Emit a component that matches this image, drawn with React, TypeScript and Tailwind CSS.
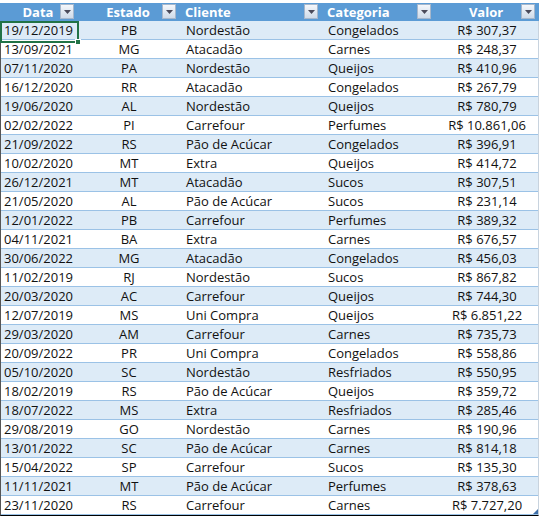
const rows: [string, string, string, string, string][] = [
  ["19/12/2019", "PB", "Nordestão", "Congelados", "R$ 307,37"],
  ["13/09/2021", "MG", "Atacadão", "Carnes", "R$ 248,37"],
  ["07/11/2020", "PA", "Nordestão", "Queijos", "R$ 410,96"],
  ["16/12/2020", "RR", "Atacadão", "Congelados", "R$ 267,79"],
  ["19/06/2020", "AL", "Nordestão", "Queijos", "R$ 780,79"],
  ["02/02/2022", "PI", "Carrefour", "Perfumes", "R$ 10.861,06"],
  ["21/09/2022", "RS", "Pão de Acúcar", "Congelados", "R$ 396,91"],
  ["10/02/2020", "MT", "Extra", "Queijos", "R$ 414,72"],
  ["26/12/2021", "MT", "Atacadão", "Sucos", "R$ 307,51"],
  ["21/05/2020", "AL", "Pão de Acúcar", "Sucos", "R$ 231,14"],
  ["12/01/2022", "PB", "Carrefour", "Perfumes", "R$ 389,32"],
  ["04/11/2021", "BA", "Extra", "Carnes", "R$ 676,57"],
  ["30/06/2022", "MG", "Atacadão", "Congelados", "R$ 456,03"],
  ["11/02/2019", "RJ", "Nordestão", "Sucos", "R$ 867,82"],
  ["20/03/2020", "AC", "Carrefour", "Queijos", "R$ 744,30"],
  ["12/07/2019", "MS", "Uni Compra", "Queijos", "R$ 6.851,22"],
  ["29/03/2020", "AM", "Carrefour", "Carnes", "R$ 735,73"],
  ["20/09/2022", "PR", "Uni Compra", "Congelados", "R$ 558,86"],
  ["05/10/2020", "SC", "Nordestão", "Resfriados", "R$ 550,95"],
  ["18/02/2019", "RS", "Pão de Acúcar", "Queijos", "R$ 359,72"],
  ["18/07/2022", "MS", "Extra", "Resfriados", "R$ 285,46"],
  ["29/08/2019", "GO", "Nordestão", "Carnes", "R$ 190,96"],
  ["13/01/2022", "SC", "Pão de Acúcar", "Carnes", "R$ 814,18"],
  ["15/04/2022", "SP", "Carrefour", "Sucos", "R$ 135,30"],
  ["11/11/2021", "MT", "Pão de Acúcar", "Perfumes", "R$ 378,63"],
  ["23/11/2020", "RS", "Carrefour", "Carnes", "R$ 7.727,20"],
];

const cols = "grid grid-cols-[78px_102px_142px_113px_104px]";

function Drop() {
  return (
    <span className="absolute right-[4px] top-[1px] w-[14px] h-[15px] border border-[#a6b7cc] bg-gradient-to-b from-[#f4f7fb] to-[#cfdbe9] flex items-center justify-center">
      <svg width="7" height="4" viewBox="0 0 7 4">
        <path d="M0 0h7L3.5 4z" fill="#4a4a5a" />
      </svg>
    </span>
  );
}

function Head({ label, align }: { label: string; align: "center" | "left" }) {
  return (
    <div
      className={
        "relative h-full flex items-center font-bold text-white " +
        (align === "center" ? "justify-center pr-[2px]" : "justify-start pl-[5px]")
      }
    >
      {label}
      <Drop />
    </div>
  );
}

export default function App() {
  return (
    <div className="w-[543px] h-[520px] bg-white pt-[3px] text-[13px] text-[#111] font-['Open_Sans',sans-serif]">
      <div className="relative w-[539px]">
        <div className={cols + " h-[18px] bg-[#5b9bd5] leading-none"}>
          <Head label="Data" align="center" />
          <Head label="Estado" align="center" />
          <Head label="Cliente" align="left" />
          <Head label="Categoria" align="left" />
          <Head label="Valor" align="center" />
        </div>
        <div className="border-l border-[#555] border-r border-r-[#c8d3de] border-b border-b-black">
          {rows.map((r, i) => (
            <div
              key={i}
              className={
                cols +
                " h-[19px] items-center border-b border-[#9bc2e6] leading-none " +
                (i % 2 === 0 ? "bg-[#ddebf7]" : "bg-white")
              }
            >
              <span className="pl-[3px]">{r[0]}</span>
              <span className="text-center pr-[2px]">{r[1]}</span>
              <span className="pl-[5px]">{r[2]}</span>
              <span className="pl-[5px]">{r[3]}</span>
              <span className="text-center pr-[2px]">{r[4]}</span>
            </div>
          ))}
        </div>
        <div className="absolute left-0 top-[18px] w-[79px] h-[22px] border-2 border-[#217346] pointer-events-none">
          <span className="absolute -right-[4px] -bottom-[4px] w-[6px] h-[6px] bg-[#217346] border border-white" />
        </div>
        <svg className="absolute right-[1px] bottom-[2px]" width="5" height="5" viewBox="0 0 5 5">
          <path d="M5 0v5H0z" fill="#3f6fa8" />
        </svg>
      </div>
    </div>
  );
}
